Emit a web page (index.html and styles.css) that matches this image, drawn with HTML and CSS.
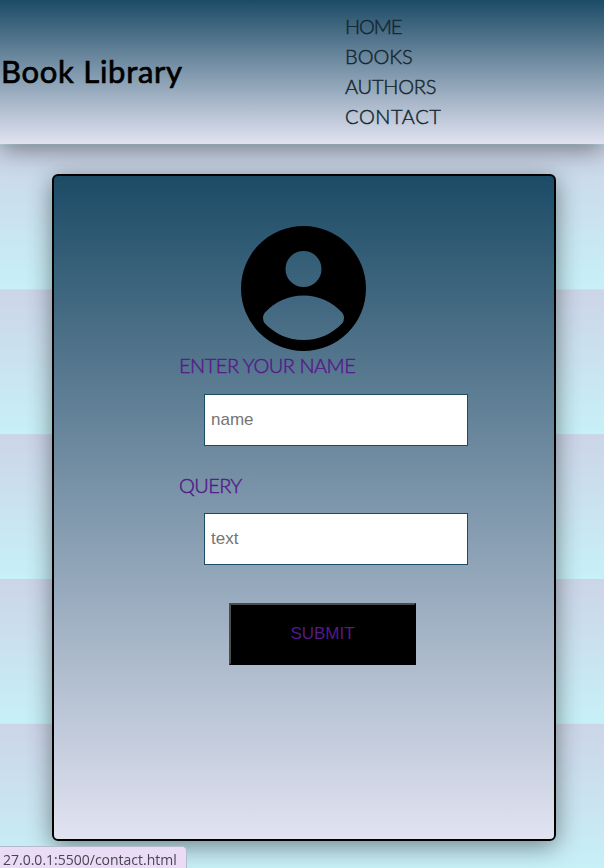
FILE: index.html
```html
<!DOCTYPE html>
<html lang="en">
<head>
<meta charset="utf-8">
<title>Book Library</title>
<link rel="stylesheet" href="styles.css">
</head>
<body>
<header class="header">
  <h1 class="brand">Book Library</h1>
  <nav class="nav">
    <a class="home">HOME</a>
    <a class="books">BOOKS</a>
    <a class="authors">AUTHORS</a>
    <a class="contact">CONTACT</a>
  </nav>
</header>
<main class="card">
  <svg class="avatar" viewBox="0 0 125 125">
    <path fill-rule="evenodd" d="M62.5 0a62.5 62.5 0 1 1 0 125a62.5 62.5 0 1 1 0-125zM62.5 25a18 18 0 1 0 0 36a18 18 0 1 0 0-36zM62.5 69.5C47 69.5 33 76.500 23.500 87Q20.500 92 23.500 97C34 108 47 114 62.500 114S91 108 101.500 97Q104.500 92 101.500 87C92 76.500 78 69.500 62.500 69.500z"/>
  </svg>
  <form class="form">
    <label class="label name-label" for="name">ENTER YOUR NAME</label>
    <input class="field" id="name" type="text" placeholder="name">
    <label class="label query-label" for="query">QUERY</label>
    <input class="field" id="query" type="text" placeholder="text">
    <button class="submit" type="button">SUBMIT</button>
  </form>
</main>
<div class="status">27.0.0.1:5500/contact.html</div>
</body>
</html>
```

FILE: styles.css
```css
* { box-sizing: border-box; }
html { height: 868px; overflow: hidden; background: linear-gradient(#ccd5e8, #c7f0f7) 0 -.2px / 100% 144.8px; }
body { margin: 0; height: 868px; overflow: hidden; font-family: Lato, sans-serif; }
.header {
  display: flex;
  align-items: center;
  height: 144px;
  background: linear-gradient(#1c4b66, #e1e3f1);
  box-shadow: 0 5px 25px rgba(0, 0, 0, .45);
}
.brand { width: 345px; margin: 0; padding: 0 0 2px 1px; font-size: 31px; line-height: 45px; font-weight: 400; -webkit-text-stroke: .7px #000; letter-spacing: .72px; }
.nav { display: flex; flex-direction: column; align-items: flex-start; padding-bottom: 2px; font-size: 20px; line-height: 30px; color: #142732; }
.nav a, .label { font-weight: 300; -webkit-text-stroke: .45px; }
.home { letter-spacing: -1.1px; }
.books { letter-spacing: 0; }
.authors { letter-spacing: -.2px; }
.contact { letter-spacing: .6px; }
.card {
  width: 504px;
  height: 667px;
  margin: 30px 0 0 52px;
  padding-top: 50px;
  border: 2px solid #000;
  border-radius: 6px;
  background: linear-gradient(#1c4b66, #e1e3f1);
  box-shadow: 0 5px 25px rgba(0, 0, 0, .45);
}
.avatar { display: block; width: 125px; height: 125px; margin-left: 187px; }
.form { display: flex; flex-direction: column; align-items: flex-start; padding-left: 125px; }
.label { font-size: 20px; color: #551a8b; }
.name-label { line-height: 28px; margin-bottom: 2px; letter-spacing: -.5px; }
.field {
  width: 264px;
  height: 52px;
  margin: 13px 0 25px 25px;
  padding: 0 6px;
  border: 1px solid #1c4b66;
  border-radius: 0;
  background: #fff;
  font: 17px "Liberation Sans", sans-serif;
}
.field::placeholder { color: #757575; }
.query-label { line-height: 29px; letter-spacing: -.6px; }
.submit {
  width: 187px;
  height: 62px;
  margin: 13px 0 0 50px;
  padding: 0;
  border: 2px solid #000;
  border-top-color: #4c4c4c;
  border-left-color: #4c4c4c;
  background: #000;
  color: #551a8b;
  font: 17px "Liberation Sans", sans-serif;
}
.status {
  position: fixed;
  left: -1px;
  bottom: 0;
  width: 188px;
  height: 22px;
  padding: 4px 0 0 3px;
  border: 1px solid #b4bccb;
  border-bottom: 0;
  border-top-right-radius: 5px;
  background: #eadcf5;
  color: #4b4453;
  font: 14px/18px "Open Sans", sans-serif;
  white-space: nowrap;
}
```
